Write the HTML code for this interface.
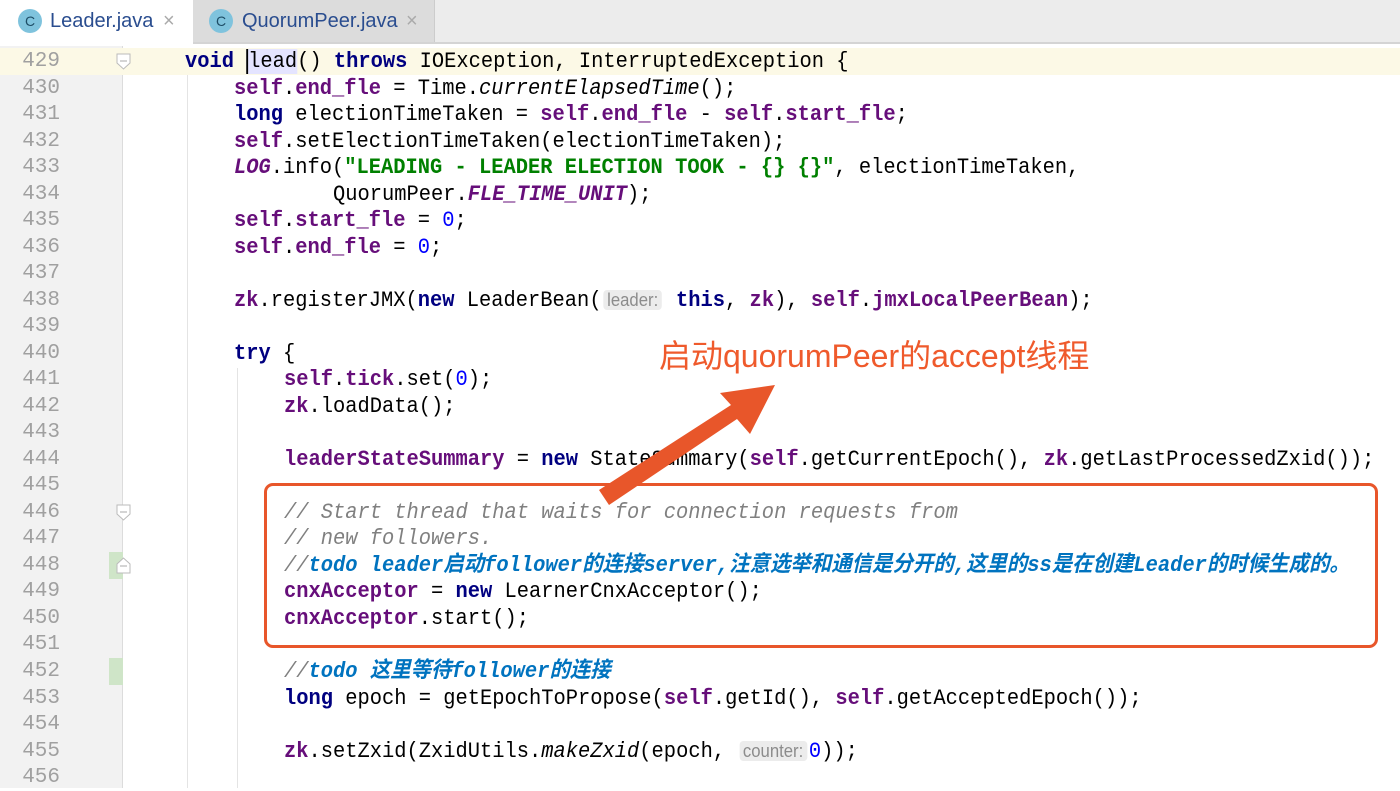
<!DOCTYPE html>
<html><head><meta charset="utf-8"><style>
*{margin:0;padding:0;box-sizing:border-box}
body{width:1400px;height:788px;overflow:hidden;background:#fff;position:relative;font-family:"Liberation Mono","Noto Sans CJK SC",monospace}
.tabbar{position:absolute;left:0;top:0;width:1400px;height:44px;background:#ececec;border-bottom:2px solid #d4d4d4}
.tab{position:absolute;top:0;height:42px;font-family:"Liberation Sans",sans-serif;font-size:20px;line-height:42px;color:#2a4d8f}
.tab .c{position:absolute;top:9px;width:24px;height:24px;border-radius:50%;background:#7fc3dd;color:#1d4d66;font-size:14px;line-height:24px;text-align:center}
.tab .x{position:absolute;top:0;color:#aaa;font-size:20px}
.gut{position:absolute;left:0;top:46px;width:123px;height:742px;background:#f2f2f2;border-right:1px solid #dcdcdc}
.cur{position:absolute;left:0;top:48px;width:1400px;height:27px;background:#fcf9e6}
.ln{position:absolute;left:0;width:60px;text-align:right;font-size:21px;color:#a0a0a0;height:27px;line-height:27px}
.code{position:absolute;white-space:pre;font-size:22px;line-height:27px;height:27px;color:#000;transform:scaleX(0.928);transform-origin:0 50%}
.k{color:#000080;font-weight:bold}
.f{color:#660e7a;font-weight:bold}
.s{color:#008000;font-weight:bold}
.i{font-style:italic}
.fi{color:#660e7a;font-weight:bold;font-style:italic}
.cm{color:#808080;font-style:italic}
.td{color:#0073bf;font-weight:bold;font-style:italic}
.n{color:#0000ff}
.h{font-family:"Liberation Sans",sans-serif;font-size:18px;color:#8c8c8c;background:#ececec;border-radius:4px;padding:0 4px;margin:0 2px}
.guide{position:absolute;width:1px;background:#e4e4e4}
</style></head><body>
<div class="tabbar">
 <div class="tab" style="left:0;width:193px;background:#fff;height:44px">
  <span class="c" style="left:18px">C</span><span style="position:absolute;left:50px">Leader.java</span><span class="x" style="left:163px">×</span></div>
 <div class="tab" style="left:193px;width:242px;background:#dcdcdc;border-right:1px solid #ccc">
  <span class="c" style="left:16px">C</span><span style="position:absolute;left:49px">QuorumPeer.java</span><span class="x" style="left:213px">×</span></div>
</div>
<div class="gut"></div>
<div class="cur"></div>
<div class="guide" style="left:187px;top:75px;height:713px"></div>
<div class="guide" style="left:237px;top:368px;height:420px"></div>
<div style="position:absolute;left:109px;top:552px;width:14px;height:27px;background:#cfe5c8"></div>
<div style="position:absolute;left:109px;top:658px;width:14px;height:27px;background:#cfe5c8"></div>
<svg style="position:absolute;left:115px;top:52px" width="18" height="20"><path d="M2 2H15V11L8.5 17L2 11Z" fill="#fff" stroke="#bbb"/><path d="M5 9H12" stroke="#aaa"/></svg>
<svg style="position:absolute;left:115px;top:503px" width="18" height="20"><path d="M2 2H15V11L8.5 17L2 11Z" fill="#fff" stroke="#bbb"/><path d="M5 9H12" stroke="#aaa"/></svg>
<svg style="position:absolute;left:115px;top:555px" width="18" height="20"><path d="M2 18H15V9L8.5 3L2 9Z" fill="#fff" stroke="#bbb"/><path d="M5 11H12" stroke="#aaa"/></svg>

<div class="ln" style="top:48px">429</div><div class="ln" style="top:74.5px">430</div><div class="ln" style="top:101px">431</div><div class="ln" style="top:127.6px">432</div><div class="ln" style="top:154px">433</div><div class="ln" style="top:180.6px">434</div><div class="ln" style="top:207px">435</div><div class="ln" style="top:233.6px">436</div><div class="ln" style="top:260px">437</div><div class="ln" style="top:286.7px">438</div><div class="ln" style="top:313px">439</div><div class="ln" style="top:339.7px">440</div><div class="ln" style="top:366px">441</div><div class="ln" style="top:392.8px">442</div><div class="ln" style="top:419px">443</div><div class="ln" style="top:445.8px">444</div><div class="ln" style="top:472px">445</div><div class="ln" style="top:498.8px">446</div><div class="ln" style="top:525px">447</div><div class="ln" style="top:551.9px">448</div><div class="ln" style="top:578px">449</div><div class="ln" style="top:604.9px">450</div><div class="ln" style="top:631px">451</div><div class="ln" style="top:658px">452</div><div class="ln" style="top:684.5px">453</div><div class="ln" style="top:711px">454</div><div class="ln" style="top:737.5px">455</div><div class="ln" style="top:764px">456</div>

<div class="code" style="left:185px;top:48px"><span class="k">void</span> <span style="background:#e4e4ff;border-left:2px solid #000">lead</span>() <span class="k">throws</span> IOException, InterruptedException {</div>
<div class="code" style="left:234px;top:74.5px"><span class="f">self</span>.<span class="f">end_fle</span> = Time.<span class="i">currentElapsedTime</span>();</div>
<div class="code" style="left:234px;top:101px"><span class="k">long</span> electionTimeTaken = <span class="f">self</span>.<span class="f">end_fle</span> - <span class="f">self</span>.<span class="f">start_fle</span>;</div>
<div class="code" style="left:234px;top:127.6px"><span class="f">self</span>.setElectionTimeTaken(electionTimeTaken);</div>
<div class="code" style="left:234px;top:154px"><span class="fi">LOG</span>.info(<span class="s">"LEADING - LEADER ELECTION TOOK - {} {}"</span>, electionTimeTaken,</div>
<div class="code" style="left:333px;top:180.6px">QuorumPeer.<span class="fi">FLE_TIME_UNIT</span>);</div>
<div class="code" style="left:234px;top:207px"><span class="f">self</span>.<span class="f">start_fle</span> = <span class="n">0</span>;</div>
<div class="code" style="left:234px;top:233.6px"><span class="f">self</span>.<span class="f">end_fle</span> = <span class="n">0</span>;</div>
<div class="code" style="left:234px;top:286.7px"><span class="f">zk</span>.registerJMX(<span class="k">new</span> LeaderBean(<span class="h">leader:</span> <span class="k">this</span>, <span class="f">zk</span>), <span class="f">self</span>.<span class="f">jmxLocalPeerBean</span>);</div>
<div class="code" style="left:234px;top:339.7px"><span class="k">try</span> {</div>
<div class="code" style="left:284px;top:366px"><span class="f">self</span>.<span class="f">tick</span>.set(<span class="n">0</span>);</div>
<div class="code" style="left:284px;top:392.8px"><span class="f">zk</span>.loadData();</div>
<div class="code" style="left:284px;top:445.8px"><span class="f">leaderStateSummary</span> = <span class="k">new</span> StateSummary(<span class="f">self</span>.getCurrentEpoch(), <span class="f">zk</span>.getLastProcessedZxid());</div>
<div class="code" style="left:284px;top:498.8px"><span class="cm">// Start thread that waits for connection requests from</span></div>
<div class="code" style="left:284px;top:525px"><span class="cm">// new followers.</span></div>
<div class="code" style="left:284px;top:551.9px"><span class="cm">//</span><span class="td">todo leader启动follower的连接server,注意选举和通信是分开的,这里的ss是在创建Leader的时候生成的。</span></div>
<div class="code" style="left:284px;top:578px"><span class="f">cnxAcceptor</span> = <span class="k">new</span> LearnerCnxAcceptor();</div>
<div class="code" style="left:284px;top:604.9px"><span class="f">cnxAcceptor</span>.start();</div>
<div class="code" style="left:284px;top:658px"><span class="cm">//</span><span class="td">todo 这里等待follower的连接</span></div>
<div class="code" style="left:284px;top:684.5px"><span class="k">long</span> epoch = getEpochToPropose(<span class="f">self</span>.getId(), <span class="f">self</span>.getAcceptedEpoch());</div>
<div class="code" style="left:284px;top:737.5px"><span class="f">zk</span>.setZxid(ZxidUtils.<span class="i">makeZxid</span>(epoch, <span class="h">counter:</span><span class="n">0</span>));</div>

<div style="position:absolute;left:264px;top:483px;width:1114px;height:165px;border:3px solid #e8562a;border-radius:9px"></div>
<svg style="position:absolute;left:0;top:0" width="1400" height="788"><path d="M599 490 L609 505 L737 419 L750 434 L775 385 L720 393 L731 405 Z" fill="#e8562a"/></svg>
<div style="position:absolute;left:659px;top:331px;font-family:'Liberation Sans','Noto Sans CJK SC',sans-serif;font-size:32px;color:#ef5a2c;white-space:nowrap">启动quorumPeer的accept线程</div>
</body></html>
